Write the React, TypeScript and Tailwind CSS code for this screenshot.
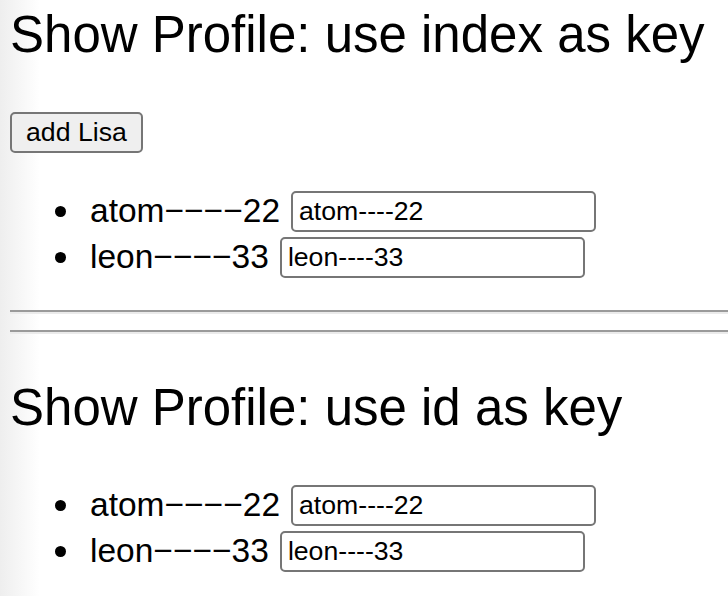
import React, { useState } from "react";

interface Person {
  id: number;
  name: string;
  age: number;
}

const initialPeople: Person[] = [
  { id: 1, name: "atom", age: 22 },
  { id: 2, name: "leon", age: 33 },
];

const ProfileRow: React.FC<{ person: Person }> = ({ person }) => (
  <li className="flex h-[46px] items-center">
    <span className="ml-[45px] mr-[24px] h-[11px] w-[11px] rounded-full bg-black" />
    <span className="text-[33.5px] leading-none text-black">
      {person.name}−−−−{person.age}
    </span>
    <input
      type="text"
      defaultValue={`${person.name}----${person.age}`}
      className="ml-[11px] h-[41px] w-[305px] rounded-[5px] border-2 border-[#767676] bg-white px-[6px] text-[26.67px] leading-none text-black outline-none"
    />
  </li>
);

export default function App() {
  const [people, setPeople] = useState<Person[]>(initialPeople);

  const addLisa = () => {
    setPeople([{ id: people.length + 1, name: "Lisa", age: 18 }, ...people]);
  };

  return (
    <div className="min-h-[596px] overflow-hidden bg-[linear-gradient(to_right,#eeeeee,#ffffff_40px)] pl-[10px] font-['Liberation_Sans',Arial,sans-serif] text-black">
      <h2 className="mt-[9px] whitespace-nowrap text-[51px] font-normal leading-[51px]">
        Show Profile: use index as key
      </h2>
      <button
        type="button"
        onClick={addLisa}
        className="mt-[52px] h-[41px] rounded-[5px] border-2 border-[#767676] bg-[#efefef] px-[14px] text-[26.67px] leading-none text-black"
      >
        add Lisa
      </button>
      <ul className="mt-[35px]">
        {people.map((person, index) => (
          <ProfileRow key={index} person={person} />
        ))}
      </ul>

      <hr className="mt-[30px] border-t-2 border-b-2 border-t-[#9a9a9a] border-b-[#ebebeb]" />
      <hr className="mt-[16px] border-t-2 border-b-2 border-t-[#9a9a9a] border-b-[#ebebeb]" />

      <h2 className="mt-[48px] whitespace-nowrap text-[51px] font-normal leading-[51px]">
        Show Profile: use id as key
      </h2>
      <ul className="mt-[49px]">
        {people.map((person) => (
          <ProfileRow key={person.id} person={person} />
        ))}
      </ul>
    </div>
  );
}
